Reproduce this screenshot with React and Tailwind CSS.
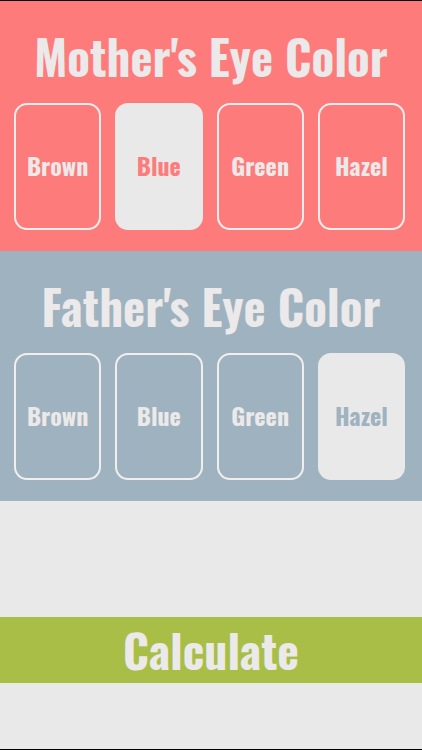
const font = { fontFamily: 'Oswald, "Roboto Condensed", sans-serif' }

const colors = ['Brown', 'Blue', 'Green', 'Hazel']

function Section({ title, selected, bg, text }) {
  return (
    <div className={`flex flex-none flex-col items-center h-[250px] pt-[28px] overflow-hidden ${bg}`}>
      <h1 className="text-[47px] leading-[54px] font-bold text-[#ebe9e9] whitespace-nowrap" style={font}>{title}</h1>
      <div className="mt-[20px] grid grid-cols-4 gap-[14px] pl-[14px] pr-[17px] w-full">
        {colors.map((c) =>
          c === selected ? (
            <div key={c} className="h-[127px] pb-[4px] rounded-[13px] bg-[#e9e9e9] flex items-center justify-center">
              <span className={`text-[24px] leading-[28px] font-bold ${text}`} style={font}>{c}</span>
            </div>
          ) : (
            <div key={c} className="h-[127px] pb-[4px] rounded-[13px] border-2 border-[#f3eeee] flex items-center justify-center">
              <span className="text-[24px] leading-[28px] font-bold text-[#ece9e9]" style={font}>{c}</span>
            </div>
          )
        )}
      </div>
    </div>
  )
}

export default function App() {
  return (
    <div className="h-[750px] w-full flex flex-col bg-[#e9e9e9] border-y border-black">
      <Section title="Mother's Eye Color" selected="Blue" bg="bg-[#fe7b7b]" text="text-[#fe7b7b]" />
      <Section title="Father's Eye Color" selected="Hazel" bg="bg-[#9fb2c0]" text="text-[#9fb2c0]" />
      <div className="h-[116px] flex-none" />
      <button className="h-[66px] pb-[2px] flex-none w-full bg-[#a9be46] flex items-center justify-center">
        <span className="text-[46px] leading-[52px] font-bold text-[#ebe9e9]" style={font}>Calculate</span>
      </button>
    </div>
  )
}
